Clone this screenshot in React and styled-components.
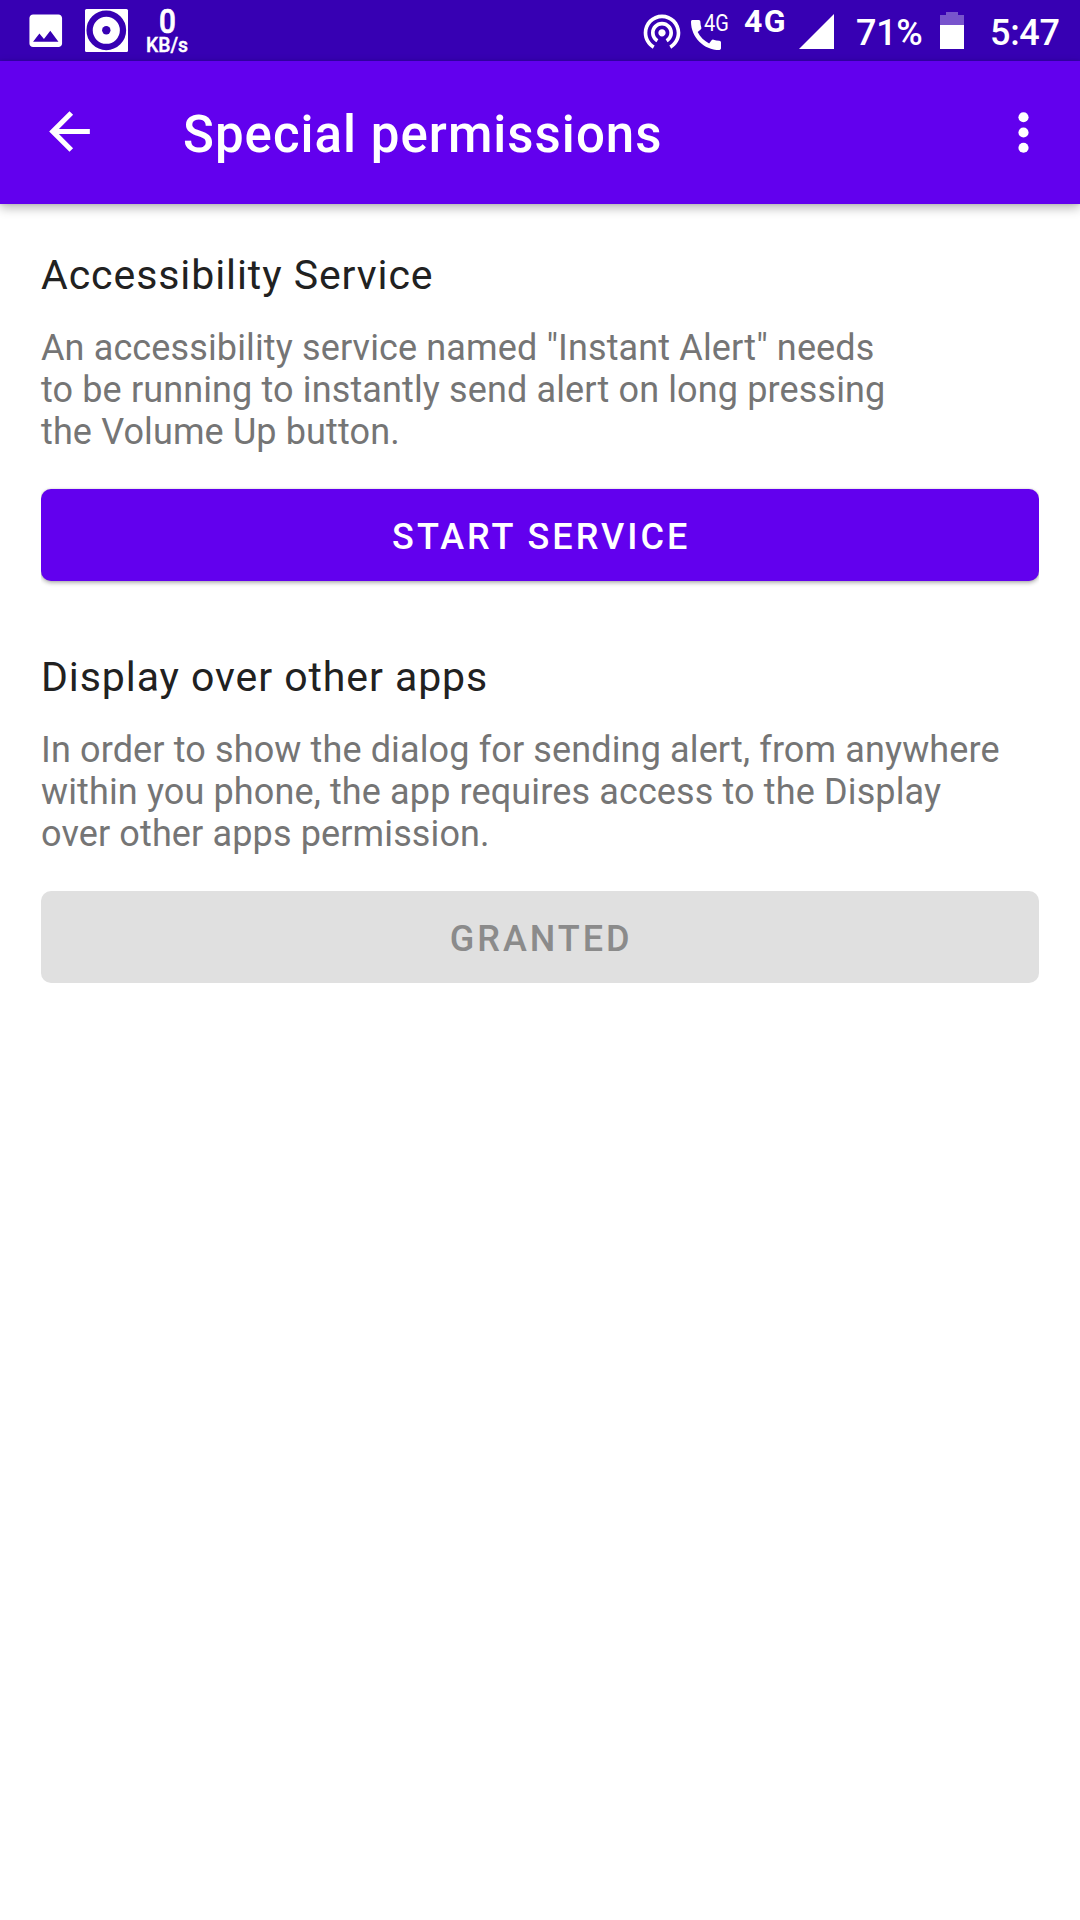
import React from "react";
import styled, { createGlobalStyle } from "styled-components";

const GlobalStyle = createGlobalStyle`
  html, body { margin: 0; padding: 0; background: #fff; }
  *, *::before, *::after { box-sizing: border-box; }
  body { font-family: Roboto, "Noto Sans", sans-serif; }
`;

const Screen = styled.div`
  display: flex;
  flex-direction: column;
  width: 1080px;
  height: 1920px;
  overflow: hidden;
  background: #fff;
`;

const StatusBar = styled.header`
  display: flex;
  justify-content: space-between;
  flex: none;
  height: 61px;
  padding: 0 20px 0 23px;
  background: #3700b3;
  color: #fff;
`;

const StatusGroup = styled.div`
  display: flex;
  align-items: flex-start;
`;

const Glyph = styled.svg`
  display: block;
  flex: none;
  width: ${(p) => p.$w}px;
  height: ${(p) => p.$h || p.$w}px;
  margin: ${(p) => p.$top || 0}px 0 ${(p) => p.$bottom || 0}px ${(p) => p.$left || 0}px;
  overflow: visible;
  fill: #fff;
`;

const NetSpeed = styled.div`
  display: flex;
  flex-direction: column;
  align-items: center;
  width: 44px;
  margin: 5px 0 0 17px;
  font-weight: 500;
`;

const SpeedValue = styled.span`
  font-size: 33px;
  line-height: 34px;
  -webkit-text-stroke: 0.7px #fff;
  transform: scaleX(0.9);
`;

const SpeedUnit = styled.span`
  font-size: 19.4px;
  line-height: 13px;
  white-space: nowrap;
  -webkit-text-stroke: 0.4px #fff;
`;

const CallTag = styled.span`
  width: 25px;
  margin: 9px 0 0 -22px;
  font-size: 23.5px;
  line-height: 28px;
  transform: scaleX(0.85);
  transform-origin: 0 50%;
`;

const NetworkType = styled.span`
  width: 42px;
  margin: 3px 0 0 15px;
  font-size: 32px;
  line-height: 37px;
  font-weight: 700;
  letter-spacing: 1.5px;
`;

const StatusText = styled.span`
  width: ${(p) => p.$width}px;
  margin: 12px 0 0 ${(p) => p.$left}px;
  font-size: 36px;
  line-height: 42px;
  font-weight: 500;
  letter-spacing: -0.3px;
  white-space: nowrap;
`;

const AppBar = styled.nav`
  display: flex;
  align-items: center;
  flex: none;
  height: 143px;
  padding: 0 26px 0 39px;
  background: #6200ee;
  color: #fff;
  box-shadow: 0 4px 10px rgba(0, 0, 0, 0.28), 0 0 3px rgba(0, 0, 0, 0.12);
`;

const IconButton = styled.button`
  display: flex;
  padding: 0;
  border: 0;
  background: none;
`;

const Title = styled.h1`
  flex: 1;
  margin: 4px 0 0 83px;
  font-size: 51px;
  line-height: 60px;
  font-weight: 500;
  letter-spacing: 1.02px;
`;

const Content = styled.main`
  display: flex;
  flex-direction: column;
  gap: 72px;
  padding: 47px 41px 0;
`;

const Section = styled.section`
  display: flex;
  flex-direction: column;
`;

const Heading = styled.h2`
  margin: 0 0 28px;
  font-size: 41px;
  line-height: 48px;
  font-weight: 400;
  letter-spacing: 0.93px;
  color: #212121;
`;

const Description = styled.p`
  margin: 0 0 36px;
  font-size: 36px;
  line-height: 42px;
  letter-spacing: 0.13px;
  color: #757575;
  white-space: pre-line;
`;

const ActionButton = styled.button`
  display: flex;
  align-items: center;
  justify-content: center;
  height: 92px;
  padding: 3px 0 0 2.4px;
  border: 0;
  border-radius: 10px;
  background: ${(p) => (p.disabled ? "#e0e0e0" : "#6200ee")};
  color: ${(p) => (p.disabled ? "#8b8b8b" : "#fff")};
  box-shadow: ${(p) =>
    p.disabled ? "none" : "0 2px 4px rgba(0, 0, 0, 0.3), 0 0 2px rgba(0, 0, 0, 0.16)"};
  clip-path: inset(-4px 0 -10px 0);
  font-family: inherit;
  font-size: 36px;
  line-height: 42px;
  font-weight: 500;
  letter-spacing: 3px;
  text-transform: uppercase;
`;

const sections = [
  {
    title: "Accessibility Service",
    text: 'An accessibility service named "Instant Alert" needs\nto be running to instantly send alert on long pressing\nthe Volume Up button.',
    action: "Start Service",
    granted: false,
  },
  {
    title: "Display over other apps",
    text: "In order to show the dialog for sending alert, from anywhere\nwithin you phone, the app requires access to the Display\nover other apps permission.",
    action: "Granted",
    granted: true,
  },
];

function Status() {
  return (
    <StatusBar>
      <StatusGroup>
        <Glyph $w={43.5} $top={8.7} $left={0.8} viewBox="0 0 24 24">
          <path d="M21 19V5c0-1.1-.9-2-2-2H5c-1.1 0-2 .9-2 2v14c0 1.1.9 2 2 2h14c1.1 0 2-.9 2-2zM8.5 13.500l2.500 3.010L14.500 12l4.500 6H5l3.500-4.500z" />
        </Glyph>
        <Glyph $w={43} $top={9} $left={17.7} viewBox="0 0 43 43">
          <rect width="43" height="43" rx="1.500" />
          <circle cx="21.300" cy="21.300" r="16.700" fill="none" stroke="#3700b3" strokeWidth="6.300" />
          <circle cx="21.300" cy="21.300" r="4.200" fill="#3700b3" />
        </Glyph>
        <NetSpeed>
          <SpeedValue>0</SpeedValue>
          <SpeedUnit>KB/s</SpeedUnit>
        </NetSpeed>
      </StatusGroup>
      <StatusGroup>
        <Glyph $w={44} $top={8.5} viewBox="0 0 24 24">
          <path d="M12 11c-1.100 0-2 .9-2 2s.9 2 2 2 2-.9 2-2-.9-2-2-2zm6 2c0-3.310-2.690-6-6-6s-6 2.690-6 6c0 2.220 1.210 4.150 3 5.190l1-1.740c-1.190-.7-2-1.970-2-3.450 0-2.210 1.790-4 4-4s4 1.790 4 4c0 1.480-.81 2.750-2 3.450l1 1.740c1.790-1.040 3-2.970 3-5.190zM12 3C6.480 3 2 7.480 2 13c0 3.700 2.010 6.920 4.990 8.650l1-1.730C5.610 18.530 4 15.960 4 13c0-4.420 3.580-8 8-8s8 3.580 8 8c0 2.960-1.610 5.530-4 6.920l1 1.730c2.990-1.730 5-4.950 5-8.650 0-5.520-4.480-10-10-10z" />
        </Glyph>
        <Glyph $w={40} $top={14.5} $left={2.5} viewBox="0 0 24 24">
          <path d="M20.010 15.380c-1.230 0-2.420-.2-3.530-.56-.35-.12-.74-.03-1.010.24l-1.570 1.970c-2.830-1.350-5.480-3.900-6.890-6.830l1.950-1.660c.27-.28.35-.67.24-1.020-.37-1.110-.56-2.300-.56-3.530 0-.54-.45-.99-.99-.99H4.190C3.650 3 3 3.240 3 3.990 3 13.280 10.730 21 20.010 21c.71 0 .99-.63.99-1.180v-3.450c0-.54-.45-.99-.99-.99z" />
        </Glyph>
        <CallTag>4G</CallTag>
        <NetworkType>4G</NetworkType>
        <Glyph $w={35} $top={14} $left={13} viewBox="0 0 35 35">
          <path d="M35 0V35H0z" />
        </Glyph>
        <StatusText $width={67} $left={22}>71%</StatusText>
        <Glyph $w={24} $h={37} $top={12} $left={17} viewBox="0 0 24 37">
          <path d="M6 0H18V3H24V13H0V3H6z" fillOpacity="0.330" />
          <path d="M0 13H24V37H0z" />
        </Glyph>
        <StatusText $width={70} $left={26}>5:47</StatusText>
      </StatusGroup>
    </StatusBar>
  );
}

export default function App() {
  return (
    <Screen>
      <GlobalStyle />
      <Status />
      <AppBar>
        <IconButton aria-label="Back">
          <Glyph $w={61} $bottom={2} viewBox="0 0 24 24">
            <path d="M20 11H7.830l5.590-5.590L12 4l-8 8 8 8 1.410-1.410L7.830 13H20v-2z" />
          </Glyph>
        </IconButton>
        <Title>Special permissions</Title>
        <IconButton aria-label="More options">
          <Glyph $w={61} viewBox="0 0 24 24">
            <circle cx="12" cy="6" r="2" />
            <circle cx="12" cy="12" r="2" />
            <circle cx="12" cy="18" r="2" />
          </Glyph>
        </IconButton>
      </AppBar>
      <Content>
        {sections.map((s) => (
          <Section key={s.title}>
            <Heading>{s.title}</Heading>
            <Description>{s.text}</Description>
            <ActionButton disabled={s.granted}>{s.action}</ActionButton>
          </Section>
        ))}
      </Content>
    </Screen>
  );
}
